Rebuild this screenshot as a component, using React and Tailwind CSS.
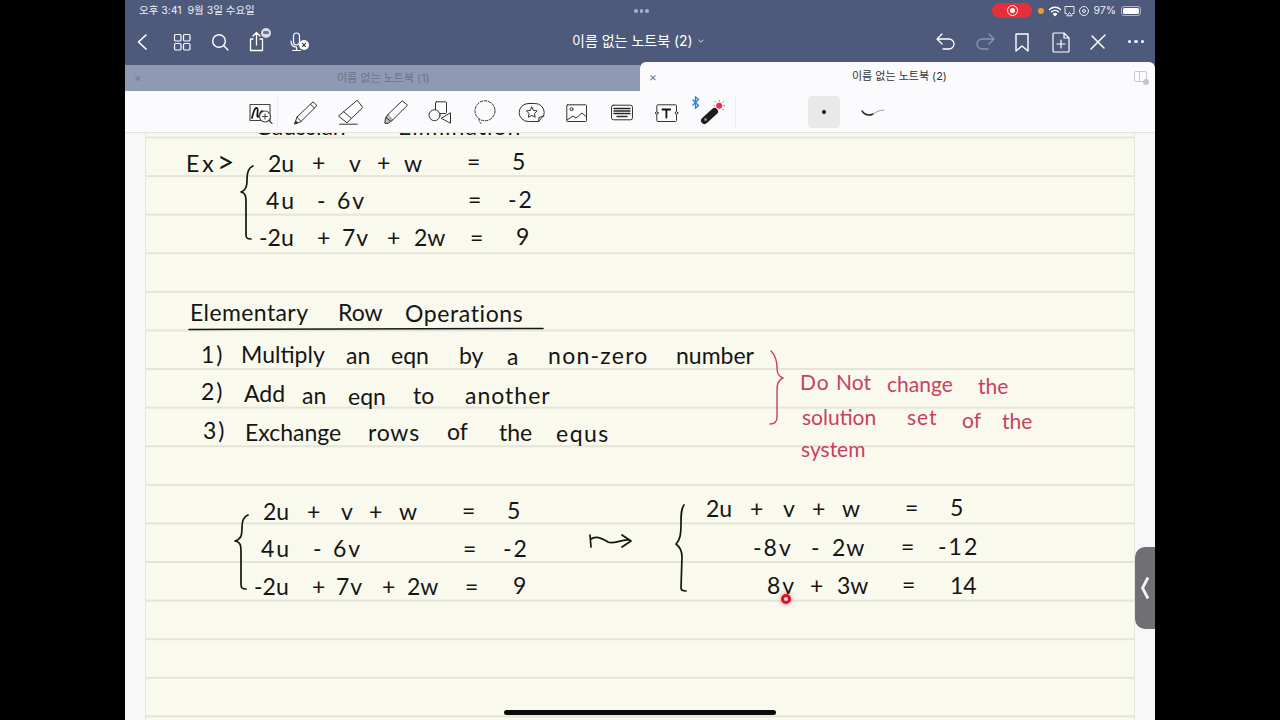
const ink = "absolute -mt-[2px] whitespace-nowrap leading-none text-[#151515] font-['Lato',sans-serif] text-[23px]";
const red = "absolute -mt-[2px] whitespace-nowrap leading-none text-[#c9405f] font-['Lato',sans-serif] text-[21px]";

const T = ({ c, children }) => <span className={`${ink} ${c}`}>{children}</span>;
const R = ({ c, children }) => <span className={`${red} ${c}`}>{children}</span>;

const Ico = ({ children, className = "w-7 h-7", vb = "0 0 28 28", stroke = "#333", sw = 1 }) => (
  <svg viewBox={vb} className={className} fill="none" stroke={stroke} strokeWidth={sw} strokeLinecap="round" strokeLinejoin="round">{children}</svg>
);

function NavLeft() {
  return (
    <div className="flex items-center pl-[4px] text-white">
      <Ico className="w-7 h-7" stroke="#fff" sw={1.7}><path d="M17 7l-7.5 7 7.5 7" /></Ico>
      <div className="ml-[11px]"><Ico stroke="#fff" sw={1.2}><rect x="6.500" y="6.500" width="6.500" height="6.500" rx="1.200" /><rect x="15.500" y="6.500" width="6.500" height="6.500" rx="1.200" /><rect x="6.500" y="15.500" width="6.500" height="6.500" rx="1.200" /><rect x="15.500" y="15.500" width="6.500" height="6.500" rx="1.200" /></Ico></div>
      <div className="ml-[10px]"><Ico stroke="#fff" sw={1.4}><circle cx="13" cy="13" r="6.300" /><path d="M17.600 17.600L22 22" /></Ico></div>
      <div className="ml-[9px] relative"><Ico stroke="#fff" sw={1.3}><path d="M10 11H7.500v11.500h12V11H17M13.500 17V4.500M10 8l3.500-3.500L17 8" /></Ico>
        <span className="absolute left-[18px] top-0 w-[10px] h-[10px] rounded-full bg-[#d8dbe3] flex items-center justify-center"><span className="w-[6px] h-[3px] bg-[#6a7590] rounded-sm" /></span>
      </div>
      <div className="ml-[13px] relative"><Ico stroke="#fff" sw={1.2}><rect x="9.500" y="5" width="6" height="12" rx="3" /><path d="M7 13c0 4 2 6 5.500 6M12.500 19v3M8.500 22.500h8" /></Ico>
        <span className="absolute left-[15px] top-[12px] w-[10px] h-[10px] rounded-full bg-white flex items-center justify-center">
          <svg viewBox="0 0 10 10" className="w-[10px] h-[10px]"><path d="M3.200 3.200l3.600 3.600M6.800 3.200l-3.600 3.600" stroke="#333" strokeWidth="1.100" /></svg>
        </span>
      </div>
    </div>
  );
}

function NavRight() {
  return (
    <div className="flex items-center ml-auto pr-[5px]">
      <Ico stroke="#fff" sw={1.3}><path d="M10 6l-5 5 5 5M5 11h12a5 5 0 010 10h-6" /></Ico>
      <div className="ml-[11px]"><Ico stroke="#8b95ad" sw={1.3}><path d="M18 6l5 5-5 5M23 11H11a5 5 0 000 10h6" /></Ico></div>
      <div className="ml-[9px]"><Ico stroke="#fff" sw={1.4}><path d="M8 6h12v17l-6-5-6 5z" /></Ico></div>
      <div className="ml-[11px]"><Ico stroke="#fff" sw={1.2}><path d="M7 5h10l5 5v13a1 1 0 01-1 1H7a1 1 0 01-1-1V6a1 1 0 011-1zM17 5v5h5M14 12v8M10 16h8" /></Ico></div>
      <div className="ml-[9px]"><Ico stroke="#fff" sw={1.5}><path d="M7 21L21 7M8 8l12 12" /></Ico></div>
      <div className="ml-[10px] w-7 flex justify-center gap-[3px]"><span className="w-[3.500px] h-[3.500px] rounded-full bg-white" /><span className="w-[3.500px] h-[3.500px] rounded-full bg-white" /><span className="w-[3.500px] h-[3.500px] rounded-full bg-white" /></div>
    </div>
  );
}

function Toolbar() {
  const Cell = ({ children }) => <div className="w-[45px] h-full flex items-center justify-center">{children}</div>;
  return (
    <div className="h-[41px] bg-[#fbfbfd] flex items-center pl-[119px] shrink-0">
      <div className="w-8 flex justify-center">
        <Ico className="w-8 h-8" vb="0 0 32 32" stroke="#444" sw={1.1}>
          <path d="M6 24.500V8.500h20v16z" />
          <path d="M8 22c1-5 3-11 5-10s-1 9 1 9 2-6 4-6 1 3 3 3" stroke="#111" strokeWidth="1.700" />
          <circle cx="21" cy="20.500" r="5.500" fill="#fbfbfd" />
          <path d="M25 24.500l3 3M18.500 20.500h5M21 18v5" />
        </Ico>
      </div>
      <div className="w-px h-[32px] bg-[#ececf0] ml-px mr-[5px]" />
      <Cell><Ico><path d="M2.800 25.500L5 19 21 3.800 25 7.500 9 23.500z" /><path d="M18.500 6.300l4 3.700M5 19l4 4.500" /><path d="M2.800 25.500l.8-2.600 1.800 1.800z" fill="#222" /></Ico></Cell>
      <Cell><Ico><path d="M1.800 17.800L20.200 2.200 25.800 9.500 10.200 24.500z" /><path d="M6.500 13.500l8 7" /><path d="M2.500 26.200h17.700" /></Ico></Cell>
      <Cell><Ico><path d="M6.200 16.200L20.200 2.800 25.500 7.200 10.800 21.800z" /><path d="M6.200 16.200L3.500 20 2.800 25.200 6 25.500 10.800 21.800" fill="#bbb" /><path d="M4 19.500l5 4" /></Ico></Cell>
      <Cell><Ico><rect x="8.500" y="3.800" width="11" height="11.700" rx="1" /><circle cx="7.500" cy="17.200" r="5.500" fill="#fbfbfd" /><path d="M23.500 15.200v10l-9-4.700z" /></Ico></Cell>
      <Cell><Ico><circle cx="13" cy="12.800" r="10" strokeDasharray="2.600 1.600" /><path d="M7 21.500c0 1.500 1 3 2 4" strokeDasharray="1.500 1.500" /></Ico></Cell>
      <Cell><Ico><path d="M11.200 5.500h7a9 9 0 019 9c0 1.500-.5 2.500-1 3.500l-4.500 5.500H11.200a9 9 0 010-18z" /><path d="M21.700 23.500l.3-4 5-1.500" /><path d="M14.800 9l1.700 3.400 3.700.5-2.700 2.600.7 3.700-3.400-1.800-3.400 1.800.7-3.700-2.700-2.600 3.700-.5z" /></Ico></Cell>
      <Cell><Ico><rect x="4.800" y="6.800" width="19.700" height="16.700" rx=".8" /><circle cx="9.500" cy="11.200" r="1.500" /><path d="M5 22l6-4 3 2 6-5 4.500 4" /></Ico></Cell>
      <Cell><Ico sw={1}><rect x="4.500" y="7.200" width="21" height="14.600" rx="2" /><path d="M7 10.500h16M7 13h16M7 15.500h16" strokeDasharray="1.300 .9" stroke="#222" strokeWidth="1.400" /><path d="M10 18.500h10" strokeWidth="1.400" /></Ico></Cell>
      <Cell><Ico sw={1}><path d="M4.800 13V7.800a1 1 0 011-1h17.700a1 1 0 011 1V13M4.800 17v5.500a1 1 0 001 1h17.700a1 1 0 001-1V17" /><circle cx="4.800" cy="15" r="1.300" /><circle cx="24.500" cy="15" r="1.300" /><path d="M10.500 11.500h7.700M14.400 11.500v8" stroke="#111" strokeWidth="1.800" /></Ico></Cell>
      <Cell>
        <svg viewBox="0 0 32 32" className="w-8 h-8 overflow-visible">
          <path d="M-2.500 3.500L3.500 9.500 .5 12V1l3 2.500-6 6" fill="none" stroke="#2a7be0" strokeWidth="1.300" />
          <path d="M9.500 24.500L19.500 15.500" stroke="#1c1c1c" strokeWidth="7" strokeLinecap="round" />
          <circle cx="10.500" cy="23.500" r="1.500" fill="#8a8a8a" />
          <circle cx="24.200" cy="9.800" r="3" fill="#e0304a" />
          <path d="M24.200 4v1.500M30 9.800h-1.500M28.500 5.500l-1 1M20 5.500l1 1M28.500 14l-1-1M18.800 9.800h1" stroke="#e0304a" strokeWidth="1" fill="none" />
        </svg>
      </Cell>
      <div className="w-px h-[32px] bg-[#ececf0] ml-[2px]" />
      <div className="ml-[72px] w-8 h-8 rounded bg-[#e9e9ea] flex items-center justify-center"><span className="w-[4px] h-[4px] rounded-full bg-[#111]" /></div>
      <div className="ml-[19px]"><svg viewBox="0 0 28 14" className="w-7 h-[14px]"><path d="M3 6c3 4 7 5 11 3" fill="none" stroke="#222" strokeWidth="1.400" strokeLinecap="round" /><path d="M14 9c4-2 6-4 11-4" fill="none" stroke="#999" strokeWidth="1" strokeLinecap="round" /></svg></div>
    </div>
  );
}

function Ink() {
  const b = { fill: "none", stroke: "#151515", strokeWidth: 1.7, strokeLinecap: "round", strokeLinejoin: "round" };
  return (
    <svg viewBox="0 0 1030 588" className="absolute left-0 top-0 w-[1030px] h-[588px]">
      <g transform="translate(-125 -132)">
        <path {...b} d="M253 165C248 167 247 172 247 178C247 186 246 189 241 191C246 192 246 196 246 203L246 234C246 237 247 238 251 238" />
        <path {...b} d="M248 514C243 516 242 520 242 526C242 535 241 538 235 540C241 541 241 545 241 552L241 583C241 587 242 588 246 588" />
        <path {...b} d="M684 504C681 508 681 514 681 522C681 534 680 539 676 543C680 546 682 549 682 556L681 587C681 589 682 590 686 590" />
        <path {...b} d="M590 534L591 546M591 538C596 534 602 537 608 541C614 544 620 538 630 539M622 534L631 540L622 546" />
        <path {...b} stroke="#c9405f" strokeWidth="1.400" d="M771 350C775 354 777 360 777 367C777 372 778 375 783 377C778 379 777 383 777 390L777 416C777 421 775 423 770 423" />
        <path {...b} strokeWidth="1.500" d="M189 328.500L543 327.500" />
      </g>
    </svg>
  );
}

function Notes() {
  return (
    <div className="absolute inset-0 overflow-hidden">
      <Ink />
      <T c="left-[130px] top-[-16px]">Gaussian</T><T c="left-[273px] top-[-16px] tracking-[1px]">Elimination</T>

      <T c="left-[61px] top-[21px] tracking-[3px]">Ex</T><T c="left-[92px] top-[15px] text-[30px]!">&gt;</T>
      <T c="left-[143px] top-[21px]">2u</T><T c="left-[187px] top-[20px]">+</T><T c="left-[224px] top-[21px]">v</T><T c="left-[252px] top-[20px]">+</T><T c="left-[279px] top-[21px]">w</T><T c="left-[342px] top-[19px]">=</T><T c="left-[387px] top-[19px]">5</T>
      <T c="left-[141px] top-[58px] tracking-[2px]">4u</T><T c="left-[192px] top-[58px]">-</T><T c="left-[212px] top-[58px] tracking-[2px]">6v</T><T c="left-[343px] top-[57px]">=</T><T c="left-[383px] top-[57px] tracking-[2px]">-2</T>
      <T c="left-[134px] top-[95px]">-2u</T><T c="left-[192px] top-[95px]">+</T><T c="left-[217px] top-[95px] tracking-[1px]">7v</T><T c="left-[262px] top-[95px]">+</T><T c="left-[289px] top-[95px]">2w</T><T c="left-[345px] top-[95px]">=</T><T c="left-[391px] top-[94px]">9</T>

      <T c="left-[65px] top-[170px] tracking-[0.400px]">Elementary</T><T c="left-[213px] top-[170px]">Row</T><T c="left-[280px] top-[171px] tracking-[0.600px]">Operations</T>

      <T c="left-[76px] top-[212px] tracking-[2px]">1)</T><T c="left-[116px] top-[212px]">Multiply</T><T c="left-[221px] top-[213px]">an</T><T c="left-[266px] top-[213px]">eqn</T><T c="left-[334px] top-[213px]">by</T><T c="left-[382px] top-[214px]">a</T><T c="left-[423px] top-[213px] tracking-[1.300px]">non-zero</T><T c="left-[551px] top-[213px]">number</T>
      <T c="left-[76px] top-[249px] tracking-[2px]">2)</T><T c="left-[119px] top-[251px]">Add</T><T c="left-[177px] top-[253px]">an</T><T c="left-[223px] top-[254px]">eqn</T><T c="left-[288px] top-[253px]">to</T><T c="left-[340px] top-[253px] tracking-[1px]">another</T>
      <T c="left-[78px] top-[288px] tracking-[2px]">3)</T><T c="left-[120px] top-[290px]">Exchange</T><T c="left-[243px] top-[290px] tracking-[0.800px]">rows</T><T c="left-[322px] top-[289px]">of</T><T c="left-[374px] top-[290px]">the</T><T c="left-[431px] top-[291px] tracking-[1.500px]">equs</T>

      <R c="left-[675px] top-[240px] tracking-[1px]">Do</R><R c="left-[711px] top-[240px]">Not</R><R c="left-[762px] top-[242px]">change</R><R c="left-[853px] top-[244px]">the</R>
      <R c="left-[677px] top-[275px]">solution</R><R c="left-[782px] top-[275px] tracking-[1px]">set</R><R c="left-[837px] top-[278px]">of</R><R c="left-[877px] top-[279px]">the</R>
      <R c="left-[676px] top-[307px]">system</R>

      <T c="left-[138px] top-[369px]">2u</T><T c="left-[182px] top-[369px]">+</T><T c="left-[216px] top-[369px]">v</T><T c="left-[244px] top-[369px]">+</T><T c="left-[274px] top-[369px]">w</T><T c="left-[337px] top-[368px]">=</T><T c="left-[382px] top-[368px]">5</T>
      <T c="left-[136px] top-[406px] tracking-[2px]">4u</T><T c="left-[188px] top-[406px]">-</T><T c="left-[208px] top-[406px] tracking-[2px]">6v</T><T c="left-[338px] top-[406px]">=</T><T c="left-[378px] top-[406px] tracking-[2px]">-2</T>
      <T c="left-[129px] top-[444px]">-2u</T><T c="left-[187px] top-[444px]">+</T><T c="left-[211px] top-[444px] tracking-[1px]">7v</T><T c="left-[257px] top-[444px]">+</T><T c="left-[282px] top-[444px]">2w</T><T c="left-[340px] top-[444px]">=</T><T c="left-[388px] top-[443px]">9</T>

      <T c="left-[581px] top-[366px]">2u</T><T c="left-[625px] top-[366px]">+</T><T c="left-[658px] top-[366px]">v</T><T c="left-[687px] top-[366px]">+</T><T c="left-[717px] top-[366px]">w</T><T c="left-[780px] top-[365px]">=</T><T c="left-[825px] top-[365px]">5</T>
      <T c="left-[628px] top-[405px] tracking-[2px]">-8v</T><T c="left-[686px] top-[405px]">-</T><T c="left-[707px] top-[405px] tracking-[1px]">2w</T><T c="left-[776px] top-[404px]">=</T><T c="left-[813px] top-[404px] tracking-[2px]">-12</T>
      <T c="left-[642px] top-[443px] tracking-[2px]">8v</T><T c="left-[685px] top-[443px]">+</T><T c="left-[712px] top-[443px]">3w</T><T c="left-[777px] top-[442px]">=</T><T c="left-[825px] top-[443px]">14</T>

      <span className="absolute left-[656px] top-[461px] w-[10px] h-[10px] rounded-full bg-[#f6d9d9] border-[3px] border-[#d8102c] shadow-[0_0_5px_rgba(224,16,47,0.55)]" />

      <div className="absolute right-0 top-[414px] w-5 h-[82px] rounded-l-[10px] bg-[#707074] flex items-center justify-center">
        <svg viewBox="0 0 12 24" className="w-[12px] h-[24px]"><path d="M9 1.500L3.500 12 9 22.500" fill="none" stroke="#f4f4f4" strokeWidth="2.800" strokeLinejoin="round" /></svg>
      </div>
      <div className="absolute left-[379px] top-[577px] w-[272px] h-[5px] rounded-full bg-[#0b0b0b]" />
    </div>
  );
}

export default function App() {
  return (
    <div className="w-[1280px] h-[720px] bg-black flex justify-center overflow-hidden font-['Inter','Noto_Sans_CJK_KR',sans-serif]">
      <div className="w-[1030px] h-full flex flex-col bg-[#4d5a7c]">
        <div className="h-[21px] shrink-0 flex items-center pl-[14px] pr-[14px] relative">
          <span className="text-[10.500px] text-[#eef0f4] whitespace-pre">오후 3:41  9월 3일 수요일</span>
          <div className="absolute left-[509px] top-[9px] flex gap-[2px]"><span className="w-[3.500px] h-[3.500px] rounded-full bg-[#aab2c5]" /><span className="w-[3.500px] h-[3.500px] rounded-full bg-[#aab2c5]" /><span className="w-[3.500px] h-[3.500px] rounded-full bg-[#aab2c5]" /></div>
          <div className="ml-auto flex items-center">
            <div className="w-10 h-[15px] rounded-full bg-[#e4303a] flex items-center justify-center"><span className="w-[11px] h-[11px] rounded-full border border-white flex items-center justify-center"><span className="w-[5px] h-[5px] rounded-full bg-white" /></span></div>
            <span className="ml-[6px] w-[6px] h-[6px] rounded-full bg-[#e8a027]" />
            <Ico className="ml-[4px] w-[14px] h-[14px]" vb="0 0 14 14" stroke="#fff" sw={1.4}><path d="M1.500 5.500c3-3 8-3 11 0M3.500 7.800c2-1.800 5-1.800 7 0" /><path d="M5.500 10c1-.8 2-.8 3 0L7 11.500z" fill="#fff" /></Ico>
            <Ico className="ml-[1px] w-[13px] h-[13px]" vb="0 0 13 13" stroke="#e8eaf0" sw={1}><path d="M3.500 9.500H2V2.500h9v7H9.500M4 11.500l2.500-3 2.500 3z" /></Ico>
            <Ico className="ml-[2px] w-[12px] h-[12px]" vb="0 0 12 12" stroke="#e8eaf0" sw={1}><circle cx="6" cy="6" r="4.500" /><circle cx="6" cy="6" r="1.500" /></Ico>
            <span className="ml-[3px] text-[10.500px] text-[#eef0f4]">97%</span>
            <div className="ml-[5px] w-[20px] h-[10px] rounded-[3px] border border-[#aab2c5] p-px"><div className="w-full h-full rounded-[1.500px] bg-white" /></div>
          </div>
        </div>
        <div className="h-[41px] shrink-0 flex items-center relative">
          <NavLeft />
          <div className="absolute left-[447px] top-[10px] flex items-center text-white text-[14px] leading-5 whitespace-nowrap">이름 없는 노트북 (2)
            <svg viewBox="0 0 10 10" className="ml-[4px] w-2 h-2"><path d="M2 3.500l3 3 3-3" fill="none" stroke="#dfe2ea" strokeWidth="1.200" /></svg>
          </div>
          <NavRight />
        </div>
        <div className="h-[29px] shrink-0 flex">
          <div className="w-[515px] mt-[3px] bg-[#8e99b3] flex items-center relative text-[#69748f] text-[11px]">
            <span className="ml-[9px] text-[11px] leading-none text-[#6e7894]">×</span>
            <span className="absolute left-[212px]">이름 없는 노트북 (1)</span>
          </div>
          <div className="flex-1 bg-[#fbfbfd] rounded-t-[6px] flex items-center relative text-[#333] text-[11px]">
            <span className="ml-[9px] text-[12px] leading-none text-[#777]">×</span>
            <span className="absolute left-[212px]">이름 없는 노트북 (2)</span>
            <div className="absolute right-[8px] top-[9px] w-[13px] h-[11px] rounded-[2px] border border-[#c9c9cc] flex"><span className="w-[5px] border-r border-[#c9c9cc]" /></div>
            <span className="absolute right-[6px] top-[17px] w-[6px] h-[6px] rounded-full bg-[#c4c4c7]" />
          </div>
        </div>
        <Toolbar />
        <div className="flex-1 relative flex bg-[#f8f8f9] border-t border-[#e2e2de]">
          <div className="w-5 shrink-0" />
          <div className="flex-1 border-x border-[#e6e6e2] bg-[#f9f9ee] bg-[linear-gradient(to_bottom,#e4e4d9_1.500px,transparent_1.500px)] bg-[length:100%_38.600px] bg-[position:0_3.500px]" />
          <div className="w-5 shrink-0" />
          <Notes />
        </div>
      </div>
    </div>
  );
}
